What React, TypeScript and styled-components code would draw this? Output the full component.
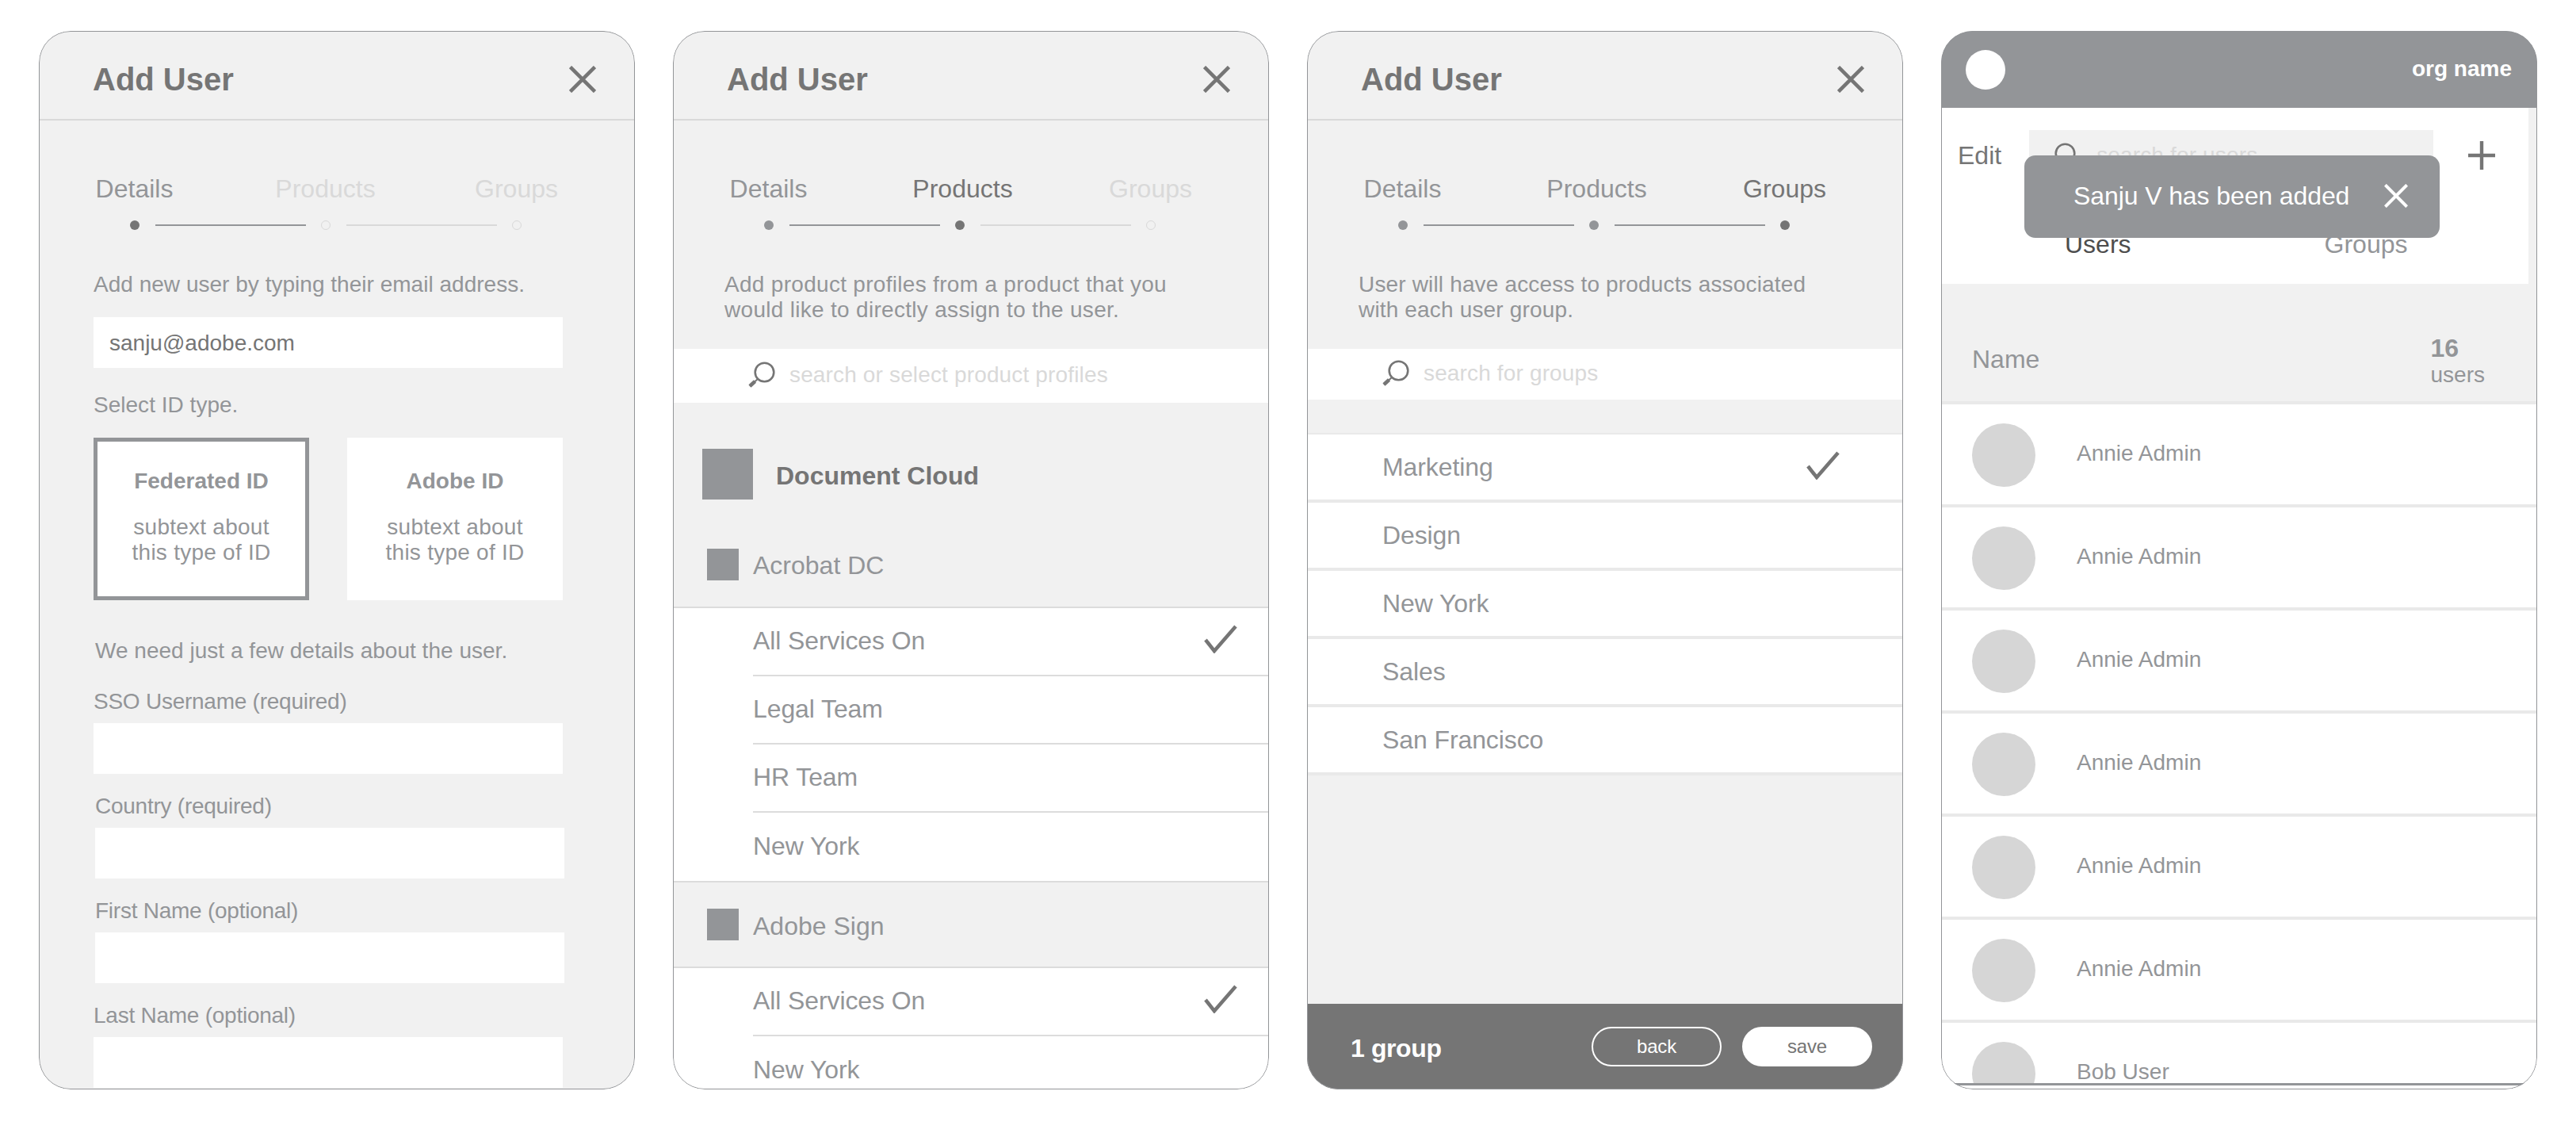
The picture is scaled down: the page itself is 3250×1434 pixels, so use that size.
import React from 'react';
import styled, { createGlobalStyle } from 'styled-components';

const INK = '#757575';
const GREY = '#939598';
const FAINT = '#d9d9d9';
const PANEL = '#f1f1f1';

const Global = createGlobalStyle`
  html, body { margin: 0; padding: 0; background: #fff; }
  body { font-family: "Liberation Sans", Arial, Helvetica, sans-serif; color: ${GREY}; }
  * { box-sizing: border-box; }
`;

const Page = styled.main`
  display: flex;
  gap: 48px;
  padding: 39px 0 0 49px;
  width: 3250px;
  height: 1434px;
  overflow: hidden;
`;

const Panel = styled.section<{ $bg?: string }>`
  position: relative;
  display: flex;
  flex-direction: column;
  flex: none;
  width: 752px;
  height: 1335px;
  border-radius: 40px;
  overflow: hidden;
  background: ${p => p.$bg ?? PANEL};
  &::after {
    content: '';
    position: absolute;
    inset: 0;
    border: 1.5px solid ${GREY};
    border-radius: 40px;
    pointer-events: none;
  }
`;

const Header = styled.header`
  display: flex;
  align-items: center;
  justify-content: space-between;
  flex: none;
  height: 113px;
  padding: 11px 49px 0 68px;
  border-bottom: 2px solid #d9d9d9;
`;

const Title = styled.h1`
  margin: 0;
  font-size: 40px;
  line-height: 48px;
  font-weight: 700;
  color: ${INK};
`;

const CloseIcon = styled.svg<{ $size?: number; $color?: string }>`
  display: block;
  flex: none;
  width: ${p => p.$size ?? 34}px;
  height: ${p => p.$size ?? 34}px;
  stroke: ${p => p.$color ?? INK};
  stroke-width: 4.6;
  fill: none;
`;

const Close = ({ size, color }: { size?: number; color?: string }) => (
  <CloseIcon viewBox="0 0 34 34" $size={size} $color={color}>
    <path d="M1.5 1.5 L32.5 32.5 M32.5 1.5 L1.5 32.5" />
  </CloseIcon>
);

const TabLabels = styled.div`
  display: grid;
  grid-template-columns: repeat(3, 241px);
  flex: none;
  margin-top: 66px;
`;

type Step = 'pending' | 'done' | 'active';
const stepColor: Record<Step, string> = { pending: FAINT, done: GREY, active: INK };

const TabLabel = styled.span<{ $state: Step; $shift?: number }>`
  padding-left: ${p => p.$shift ?? 0}px;
  text-align: center;
  font-size: 32px;
  line-height: 40px;
  color: ${p => stepColor[p.$state]};
`;

const Track = styled.div`
  display: flex;
  align-items: center;
  flex: none;
  gap: 19.5px;
  height: 12px;
  margin-top: 20px;
  padding-left: 115px;
`;

const Dot = styled.i<{ $state: Step }>`
  display: block;
  flex: none;
  width: 12px;
  height: 12px;
  border-radius: 50%;
  background: ${p => (p.$state === 'pending' ? 'transparent' : stepColor[p.$state])};
  border: ${p => (p.$state === 'pending' ? `1.5px solid ${FAINT}` : 'none')};
`;

const TrackLine = styled.i<{ $on: boolean }>`
  display: block;
  flex: none;
  width: 190px;
  height: 2px;
  background: ${p => (p.$on ? GREY : FAINT)};
`;

const Stepper = ({ step }: { step: number }) => {
  const stateOf = (i: number): Step => (i === step && i > 0 ? 'active' : i <= step ? 'done' : 'pending');
  const dotOf = (i: number): Step => (i === step ? 'active' : i < step ? 'done' : 'pending');
  return (
    <>
      <TabLabels>
        <TabLabel $state={stateOf(0)}>Details</TabLabel>
        <TabLabel $state={stateOf(1)} $shift={step > 0 ? 8 : 0}>Products</TabLabel>
        <TabLabel $state={stateOf(2)}>Groups</TabLabel>
      </TabLabels>
      <Track>
        <Dot $state={dotOf(0)} />
        <TrackLine $on />
        <Dot $state={dotOf(1)} />
        <TrackLine $on={step > 1} />
        <Dot $state={dotOf(2)} />
      </Track>
    </>
  );
};

const Form = styled.div`
  display: flex;
  flex-direction: column;
  flex: none;
  width: 592px;
  margin-left: 69px;
`;

const Note = styled.p<{ $top: number; $nudge?: number }>`
  margin: ${p => p.$top}px 0 0 ${p => p.$nudge ?? 0}px;
  font-size: 28px;
  line-height: 32px;
  letter-spacing: 0.02px;
  color: ${GREY};
`;

const TextBox = styled.div<{ $nudge?: number }>`
  flex: none;
  width: 592px;
  height: 64px;
  margin-left: ${p => p.$nudge ?? 0}px;
  padding-left: 20px;
  background: #fff;
  font-size: 28px;
  line-height: 65px;
  color: ${INK};
`;

const EmailBox = styled(TextBox)`
  margin-top: 25px;
`;

const Cards = styled.div`
  display: flex;
  justify-content: space-between;
  margin-top: 25px;
`;

const Card = styled.div<{ $selected?: boolean }>`
  width: 272px;
  height: 205px;
  padding-top: 39px;
  background: #fff;
  text-align: center;
  box-shadow: ${p => (p.$selected ? `inset 0 0 0 5px ${GREY}` : 'none')};
`;

const CardTitle = styled.div`
  font-size: 28px;
  line-height: 32px;
  font-weight: 700;
  color: ${GREY};
`;

const CardText = styled.div`
  margin-top: 26px;
  font-size: 28px;
  line-height: 32px;
  letter-spacing: 0.25px;
  color: ${GREY};
`;

const FieldList = styled.div`
  display: flex;
  flex-direction: column;
  gap: 25px;
  margin-top: 32px;
`;

const Field = styled.div<{ $nudge?: number }>`
  display: flex;
  flex-direction: column;
  margin-left: ${p => p.$nudge ?? 0}px;
`;

const FieldLabel = styled.label`
  margin-bottom: 11px;
  font-size: 28px;
  line-height: 32px;
  letter-spacing: -0.25px;
  color: ${GREY};
`;

const Intro = styled.p<{ $track: number }>`
  flex: none;
  margin: 53px 0 0 65px;
  font-size: 28px;
  line-height: 31.5px;
  letter-spacing: ${p => p.$track}px;
  color: ${GREY};
  white-space: pre-line;
`;

const SearchBand = styled.div<{ $height: number }>`
  display: flex;
  align-items: center;
  flex: none;
  gap: 17px;
  height: ${p => p.$height}px;
  margin-top: 34px;
  padding: 0 0 3px 94px;
  background: #fff;
`;

const Placeholder = styled.span`
  font-size: 28px;
  line-height: 32px;
  letter-spacing: 0.15px;
  color: ${FAINT};
`;

const LensSvg = styled.svg`
  display: block;
  flex: none;
  width: 36px;
  height: 33px;
`;

const Lens = () => (
  <LensSvg viewBox="0 0 36 33">
    <circle cx="21.5" cy="13.5" r="11.8" fill="none" stroke={INK} strokeWidth="2.6" />
    <path d="M13 22 L3 31" fill="none" stroke={INK} strokeWidth="2" />
    <path d="M9.5 25 L3 31" fill="none" stroke={INK} strokeWidth="4.6" />
  </LensSvg>
);

const CloudRow = styled.div`
  display: flex;
  align-items: center;
  flex: none;
  gap: 29px;
  margin: 58px 0 28px 37px;
`;

const CloudTile = styled.i`
  display: block;
  flex: none;
  width: 64px;
  height: 64px;
  background: ${GREY};
`;

const CloudName = styled.strong`
  padding-top: 4px;
  font-size: 32px;
  line-height: 40px;
  font-weight: 700;
  color: ${INK};
`;

const ProductHead = styled.div<{ $next?: boolean }>`
  display: flex;
  align-items: center;
  flex: none;
  gap: 18px;
  height: ${p => (p.$next ? 110 : 109)}px;
  padding-left: 43px;
  border-top: ${p => (p.$next ? '2px solid #dcdcdc' : 'none')};
  border-bottom: 2px solid #dcdcdc;
`;

const ProductTile = styled.i`
  display: block;
  flex: none;
  width: 40px;
  height: 40px;
  background: ${GREY};
`;

const ProductName = styled.span`
  padding-top: 3px;
  font-size: 32px;
  line-height: 40px;
  color: ${GREY};
`;

const ProfileList = styled.div`
  flex: none;
  background: #fff;
`;

const ProfileRow = styled.div<{ $last?: boolean }>`
  display: flex;
  align-items: center;
  justify-content: space-between;
  height: 86px;
  margin-left: 101px;
  padding: 0 40px 2px 0;
  border-bottom: ${p => (p.$last ? 'none' : '2px solid #dcdcdc')};
  font-size: 32px;
  letter-spacing: -0.1px;
  color: ${GREY};
`;

const CheckSvg = styled.svg`
  display: block;
  flex: none;
  width: 42px;
  height: 36px;
  margin-top: -4px;
`;

const Check = () => (
  <CheckSvg viewBox="0 0 42 36">
    <path d="M2 19 L13 33 L40 2" fill="none" stroke={INK} strokeWidth="4.6" />
  </CheckSvg>
);

const GroupList = styled.div`
  flex: none;
  margin-top: 42px;
  background: #fff;
  border-top: 2px solid #e9e9e9;
`;

const GroupRow = styled.div`
  display: flex;
  align-items: center;
  justify-content: space-between;
  height: 86px;
  padding: 0 80px 0 95px;
  border-bottom: 4px solid #e9e9e9;
  font-size: 32px;
  letter-spacing: -0.1px;
  color: ${GREY};
`;

const Footer = styled.footer`
  display: flex;
  align-items: center;
  flex: none;
  gap: 26px;
  height: 108px;
  margin-top: auto;
  padding: 0 39px 0 55px;
  background: ${INK};
`;

const FooterCount = styled.strong`
  margin-right: auto;
  padding-top: 5px;
  font-size: 32px;
  font-weight: 700;
  letter-spacing: -0.4px;
  color: #fff;
`;

const Pill = styled.button<{ $solid?: boolean }>`
  width: 164px;
  height: 50px;
  padding: 0;
  border: 2px solid #fff;
  border-radius: 25px;
  background: ${p => (p.$solid ? '#fff' : 'transparent')};
  color: ${p => (p.$solid ? INK : '#fff')};
  font-family: inherit;
  font-size: 24px;
  letter-spacing: -0.2px;
`;

const OrgBar = styled.div`
  display: flex;
  align-items: center;
  justify-content: space-between;
  flex: none;
  height: 97px;
  padding: 0 32px 0 31px;
  background: ${GREY};
`;

const OrgLogo = styled.i`
  display: block;
  width: 50px;
  height: 50px;
  border-radius: 50%;
  background: #fff;
`;

const OrgName = styled.strong`
  margin-bottom: 2px;
  font-size: 28px;
  line-height: 36px;
  font-weight: 700;
  color: #fff;
`;

const TopShade = styled.div`
  flex: none;
  background: ${PANEL};
`;

const TopArea = styled.div`
  height: 222px;
  margin-right: 11px;
  padding-top: 28px;
  background: #fff;
`;

const Toolbar = styled.div`
  display: flex;
  align-items: center;
  height: 64px;
  padding-left: 21px;
`;

const EditLink = styled.span`
  font-size: 32px;
  color: ${INK};
`;

const UserSearch = styled.div`
  display: flex;
  align-items: center;
  gap: 25px;
  width: 510px;
  height: 64px;
  margin: 0 44px 0 35px;
  padding-left: 24px;
  background: ${PANEL};
`;

const PlusSvg = styled.svg`
  display: block;
  flex: none;
  width: 34px;
  height: 36px;
`;

const ListTabs = styled.div`
  display: flex;
  gap: 244px;
  margin-top: 60px;
  padding-left: 156px;
`;

const ListTab = styled.span<{ $active?: boolean }>`
  font-size: 32px;
  line-height: 40px;
  color: ${p => (p.$active ? '#4d4d4d' : GREY)};
`;

const Toast = styled.div`
  position: absolute;
  top: 157px;
  left: 105px;
  z-index: 2;
  display: flex;
  align-items: center;
  gap: 44px;
  width: 524px;
  height: 104px;
  padding: 0 0 2px 62px;
  border-radius: 14px;
  background: ${GREY};
  font-size: 32px;
  letter-spacing: -0.1px;
  color: #fff;
`;

const ColumnHead = styled.div`
  display: flex;
  justify-content: space-between;
  flex: none;
  height: 152px;
  padding: 65px 66px 0 39px;
  border-bottom: 4px solid #e9e9e9;
  background: ${PANEL};
`;

const ColumnName = styled.span`
  margin-top: 10px;
  font-size: 32px;
  line-height: 40px;
  color: ${GREY};
`;

const Count = styled.div`
  display: flex;
  flex-direction: column;
  font-size: 28px;
  line-height: 36px;
  color: ${GREY};
`;

const CountNumber = styled.strong`
  font-size: 32px;
  line-height: 32px;
  font-weight: 700;
`;

const UserScroll = styled.div`
  flex: 1;
  min-height: 0;
  overflow: hidden;
  margin-bottom: 5px;
  border-bottom: 3px solid ${GREY};
  background: #fff;
`;

const UserRow = styled.div`
  display: flex;
  align-items: center;
  gap: 52px;
  height: 130px;
  padding: 2px 0 0 39px;
  border-bottom: 4px solid #e9e9e9;
`;

const Avatar = styled.i`
  display: block;
  flex: none;
  width: 80px;
  height: 80px;
  border-radius: 50%;
  background: #d6d6d6;
`;

const UserName = styled.span`
  margin-bottom: 4px;
  font-size: 28px;
  color: ${GREY};
`;

const PanelHeader = () => (
  <Header>
    <Title>Add User</Title>
    <Close />
  </Header>
);

const fields: { label: string; nudge?: number }[] = [
  { label: 'SSO Username (required)' },
  { label: 'Country (required)', nudge: 2 },
  { label: 'First Name (optional)', nudge: 2 },
  { label: 'Last Name (optional)' },
];

const adobeProfiles = ['All Services On', 'Legal Team', 'HR Team', 'New York'];
const signProfiles = ['All Services On', 'New York'];
const groups = ['Marketing', 'Design', 'New York', 'Sales', 'San Francisco'];
const users = ['Annie Admin', 'Annie Admin', 'Annie Admin', 'Annie Admin', 'Annie Admin', 'Annie Admin', 'Bob User'];

const Profiles = ({ names }: { names: string[] }) => (
  <ProfileList>
    {names.map((name, i) => (
      <ProfileRow key={name} $last={i === names.length - 1}>
        {name}
        {i === 0 && <Check />}
      </ProfileRow>
    ))}
  </ProfileList>
);

export default function App() {
  return (
    <>
      <Global />
      <Page>
        <Panel>
          <PanelHeader />
          <Stepper step={0} />
          <Form>
            <Note $top={53}>Add new user by typing their email address.</Note>
            <EmailBox>sanju@adobe.com</EmailBox>
            <Note $top={31}>Select ID type.</Note>
            <Cards>
              <Card $selected>
                <CardTitle>Federated ID</CardTitle>
                <CardText>subtext about<br />this type of ID</CardText>
              </Card>
              <Card>
                <CardTitle>Adobe ID</CardTitle>
                <CardText>subtext about<br />this type of ID</CardText>
              </Card>
            </Cards>
            <Note $top={48} $nudge={2}>We need just a few details about the user.</Note>
            <FieldList>
              {fields.map(f => (
                <Field key={f.label} $nudge={f.nudge}>
                  <FieldLabel>{f.label}</FieldLabel>
                  <TextBox />
                </Field>
              ))}
            </FieldList>
          </Form>
        </Panel>

        <Panel>
          <PanelHeader />
          <Stepper step={1} />
          <Intro $track={0.3}>{'Add product profiles from a product that you\nwould like to directly assign to the user.'}</Intro>
          <SearchBand $height={68}>
            <Lens />
            <Placeholder>search or select product profiles</Placeholder>
          </SearchBand>
          <CloudRow>
            <CloudTile />
            <CloudName>Document Cloud</CloudName>
          </CloudRow>
          <ProductHead>
            <ProductTile />
            <ProductName>Acrobat DC</ProductName>
          </ProductHead>
          <Profiles names={adobeProfiles} />
          <ProductHead $next>
            <ProductTile />
            <ProductName>Adobe Sign</ProductName>
          </ProductHead>
          <Profiles names={signProfiles} />
        </Panel>

        <Panel>
          <PanelHeader />
          <Stepper step={2} />
          <Intro $track={0.16}>{'User will have access to products associated\nwith each user group.'}</Intro>
          <SearchBand $height={64}>
            <Lens />
            <Placeholder>search for groups</Placeholder>
          </SearchBand>
          <GroupList>
            {groups.map((g, i) => (
              <GroupRow key={g}>
                {g}
                {i === 0 && <Check />}
              </GroupRow>
            ))}
          </GroupList>
          <Footer>
            <FooterCount>1 group</FooterCount>
            <Pill>back</Pill>
            <Pill $solid>save</Pill>
          </Footer>
        </Panel>

        <Panel $bg="#fff">
          <OrgBar>
            <OrgLogo />
            <OrgName>org name</OrgName>
          </OrgBar>
          <TopShade>
            <TopArea>
              <Toolbar>
                <EditLink>Edit</EditLink>
                <UserSearch>
                  <Lens />
                  <Placeholder>search for users</Placeholder>
                </UserSearch>
                <PlusSvg viewBox="0 0 34 36">
                  <path d="M17 0 V36 M0 18 H34" fill="none" stroke={INK} strokeWidth="4.4" />
                </PlusSvg>
              </Toolbar>
              <ListTabs>
                <ListTab $active>Users</ListTab>
                <ListTab>Groups</ListTab>
              </ListTabs>
            </TopArea>
          </TopShade>
          <Toast>
            Sanju V has been added
            <Close size={30} color="#fff" />
          </Toast>
          <ColumnHead>
            <ColumnName>Name</ColumnName>
            <Count>
              <CountNumber>16</CountNumber>
              users
            </Count>
          </ColumnHead>
          <UserScroll>
            {users.map((u, i) => (
              <UserRow key={i}>
                <Avatar />
                <UserName>{u}</UserName>
              </UserRow>
            ))}
          </UserScroll>
        </Panel>
      </Page>
    </>
  );
}
